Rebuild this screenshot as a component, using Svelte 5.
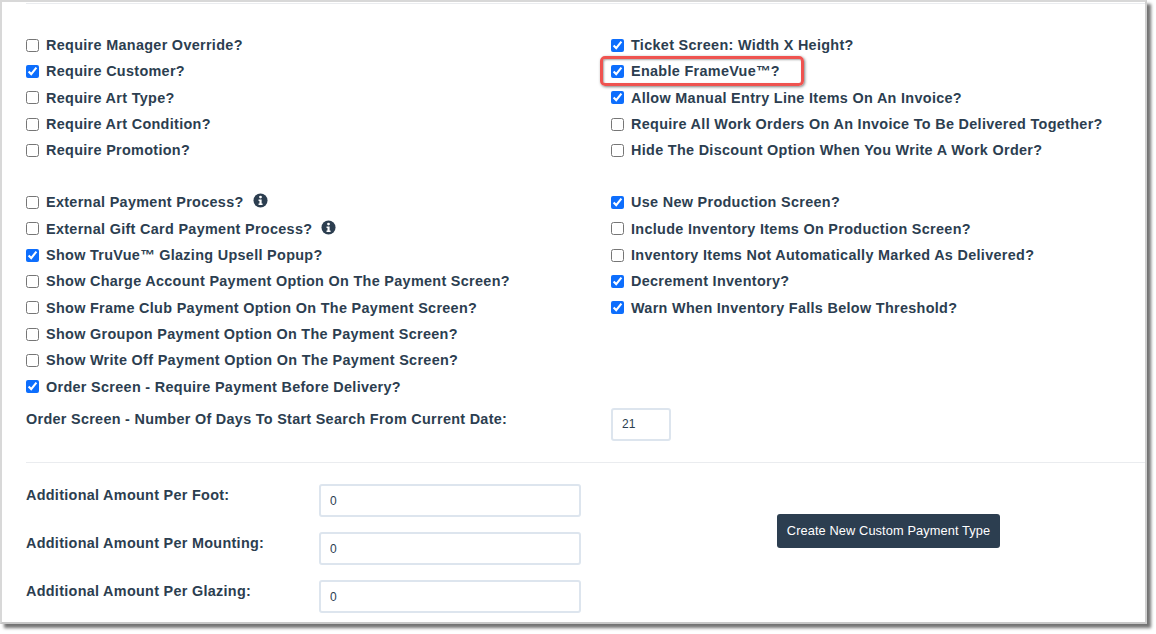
<script>
  const groupA = {
    left: [
      { label: 'Require Manager Override?', on: false },
      { label: 'Require Customer?', on: true },
      { label: 'Require Art Type?', on: false },
      { label: 'Require Art Condition?', on: false },
      { label: 'Require Promotion?', on: false }
    ],
    right: [
      { label: 'Ticket Screen: Width X Height?', on: true },
      { label: 'Enable FrameVue™?', on: true },
      { label: 'Allow Manual Entry Line Items On An Invoice?', on: true },
      { label: 'Require All Work Orders On An Invoice To Be Delivered Together?', on: false },
      { label: 'Hide The Discount Option When You Write A Work Order?', on: false }
    ]
  }
  const groupB = {
    left: [
      { label: 'External Payment Process?', on: false, info: true },
      { label: 'External Gift Card Payment Process?', on: false, info: true },
      { label: 'Show TruVue™ Glazing Upsell Popup?', on: true },
      { label: 'Show Charge Account Payment Option On The Payment Screen?', on: false },
      { label: 'Show Frame Club Payment Option On The Payment Screen?', on: false },
      { label: 'Show Groupon Payment Option On The Payment Screen?', on: false },
      { label: 'Show Write Off Payment Option On The Payment Screen?', on: false },
      { label: 'Order Screen - Require Payment Before Delivery?', on: true }
    ],
    right: [
      { label: 'Use New Production Screen?', on: true },
      { label: 'Include Inventory Items On Production Screen?', on: false },
      { label: 'Inventory Items Not Automatically Marked As Delivered?', on: false },
      { label: 'Decrement Inventory?', on: true },
      { label: 'Warn When Inventory Falls Below Threshold?', on: true }
    ]
  }
  const amounts = ['Foot', 'Mounting', 'Glazing']
</script>

{#snippet column(rows)}
  <div class="column">
    {#each rows as row}
      <label class="check">
        <input type="checkbox" checked={row.on} />
        <span>{row.label}</span>
        {#if row.info}
          <svg class="info" viewBox="0 0 16 16" aria-hidden="true">
            <circle cx="8" cy="8" r="7.5" fill="#2c3e50" />
            <circle cx="8" cy="4.3" r="1.5" fill="#fff" />
            <path d="M5.9 6.9h3.3v4.4h1v1.5H5.9v-1.5h1v-2.9h-1z" fill="#fff" />
          </svg>
        {/if}
      </label>
    {/each}
  </div>
{/snippet}

<div class="frame">
  <div class="sheet">
    <section class="grid first">
      {@render column(groupA.left)}
      {@render column(groupA.right)}
    </section>

    <section class="grid second">
      {@render column(groupB.left)}
      {@render column(groupB.right)}
    </section>

    <section class="grid days">
      <div class="field-label">Order Screen - Number Of Days To Start Search From Current Date:</div>
      <div><input class="text days-input" type="text" value="21" /></div>
    </section>

    <hr />

    <section class="bottom">
      <div class="amounts">
        {#each amounts as name}
          <div class="amount">
            <div class="field-label">Additional Amount Per {name}:</div>
            <input class="text" type="text" value="0" />
          </div>
        {/each}
      </div>
      <button type="button">Create New Custom Payment Type</button>
    </section>

    <div class="callout"></div>
  </div>
</div>

<style>
  :global(body) {
    margin: 0;
    min-height: 634px;
    background: #fff;
  }
  .frame {
    width: 1147px;
    height: 624px;
    box-sizing: border-box;
    background: #fff;
    border: 2px solid #d8d8d8;
    border-right-color: #d0d0d0;
    border-bottom-color: #c8c8c8;
    box-shadow: 4px 4px 3px rgba(0, 0, 0, 0.55);
    font-family: 'Liberation Sans', Arial, sans-serif;
    color: #2c3e50;
  }
  .sheet {
    position: relative;
    height: 100%;
    box-sizing: border-box;
    margin: 0;
    padding: 1px 0 0 24px;
  }
  .sheet::before {
    content: '';
    display: block;
    height: 1px;
    background: #eaecef;
  }
  .grid {
    display: grid;
    grid-template-columns: 585px 1fr;
  }
  .first {
    margin-top: 28px;
  }
  .second {
    margin-top: 25.6px;
  }
  .column {
    display: flex;
    flex-direction: column;
  }
  .check {
    display: flex;
    align-items: center;
    height: 26.33px;
    font-size: 14.4px;
    font-weight: 700;
    letter-spacing: 0.32px;
    white-space: nowrap;
  }
  .check input {
    width: 13px;
    height: 13px;
    margin: 0 7px 0 0;
    accent-color: #0d6efd;
  }
  .info {
    width: 15px;
    height: 15px;
    margin: -3px 0 0 9px;
  }
  .days {
    margin-top: 8px;
    align-items: start;
  }
  .field-label {
    font-size: 14.4px;
    font-weight: 700;
    line-height: 20px;
    letter-spacing: 0.3px;
    white-space: nowrap;
  }
  .days .field-label {
    padding-top: 1px;
  }
  .amount .field-label {
    padding-top: 1px;
  }
  .text {
    display: block;
    box-sizing: border-box;
    width: 262px;
    height: 33px;
    padding: 0 9px;
    border: 2px solid #dde5ee;
    border-radius: 3px;
    background: #fff;
    color: #2c3e50;
    font: 12px 'Liberation Sans', Arial, sans-serif;
  }
  .amount .text {
    padding-top: 2px;
  }
  .text.days-input {
    width: 60px;
  }
  hr {
    height: 1px;
    margin: 21px 0 0;
    border: 0;
    background: #eaecef;
  }
  .bottom {
    display: flex;
    align-items: flex-start;
    margin-top: 21px;
  }
  .amounts {
    display: flex;
    flex-direction: column;
    gap: 15px;
  }
  .amount {
    display: grid;
    grid-template-columns: 293px 262px;
  }
  button {
    margin: 30px 0 0 196px;
    width: 223px;
    height: 34px;
    padding: 0;
    border: 0;
    border-radius: 3px;
    background: #2c3e50;
    color: #fff;
    font: 12.8px 'Liberation Sans', Arial, sans-serif;
    letter-spacing: 0.1px;
  }
  .callout {
    position: absolute;
    left: 598px;
    top: 54px;
    width: 198px;
    height: 24px;
    border: 3px solid #ef5350;
    border-radius: 5px;
    box-shadow: 1px 1px 3px rgba(0, 0, 0, 0.5), inset 1px 1px 2px rgba(0, 0, 0, 0.35);
  }
</style>
